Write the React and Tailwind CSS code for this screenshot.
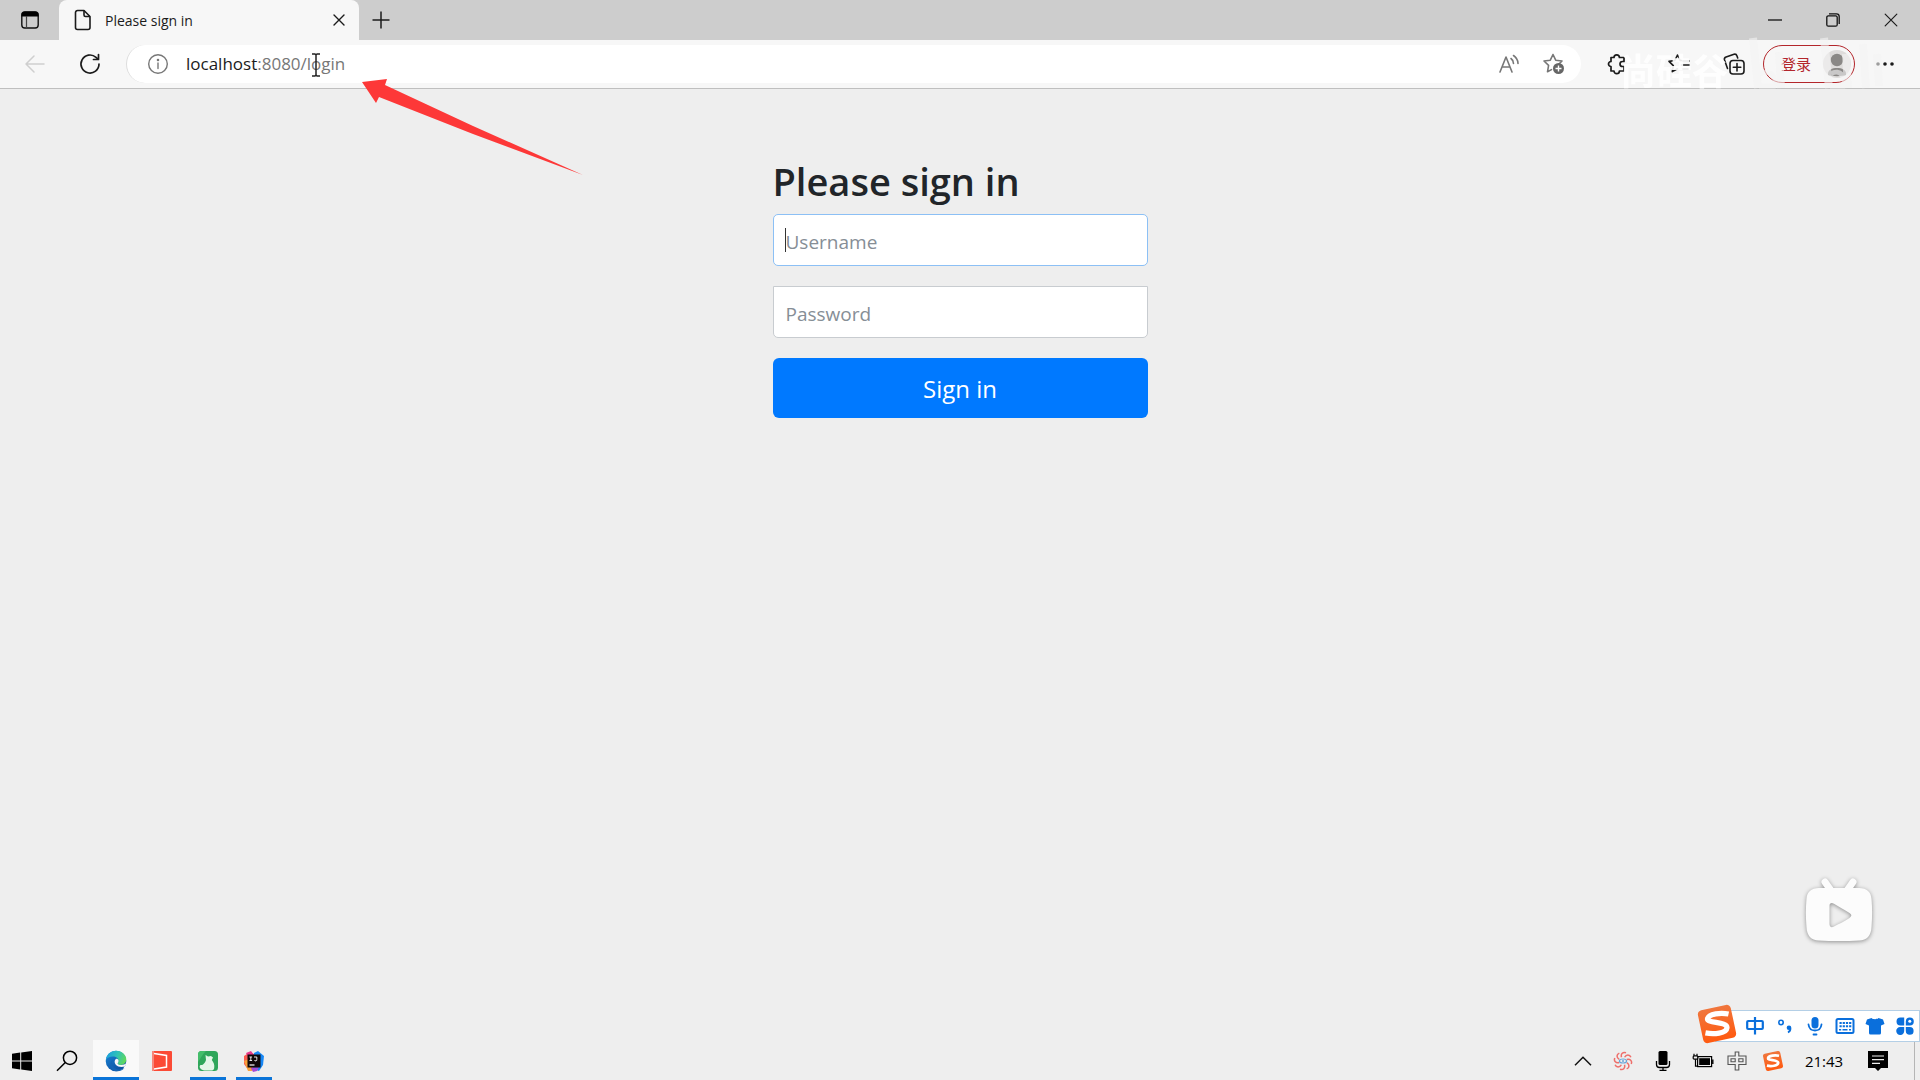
import React, { useState } from "react";

/* ---------- browser icons ---------- */

const TabActionsIcon = () => (
    <svg width="20" height="20" viewBox="0 0 20 20" fill="none">
        <rect x="1.8" y="2" width="16.4" height="16" rx="3" stroke="#111" strokeWidth="1.4" />
        <path d="M1.5 6.5V5A3.5 3.5 0 0 1 5 1.5h10A3.5 3.5 0 0 1 18.5 5v1.5z" fill="#000" />
        <path d="M6.5 6v12" stroke="#444" strokeWidth="1.2" />
    </svg>
);

const FileIcon = () => (
    <svg width="18" height="22" viewBox="0 0 18 22" fill="none" stroke="#1b1b1b" strokeWidth="1.6" strokeLinejoin="round">
        <path d="M3.5 1.5H10l6 6v11a2 2 0 0 1-2 2H3.5a2 2 0 0 1-2-2v-15a2 2 0 0 1 2-2z" />
        <path d="M10 1.5V6a1.5 1.5 0 0 0 1.5 1.5H16" />
    </svg>
);

const CrossIcon = ({ size, width }) => (
    <svg width={size} height={size} viewBox="0 0 12 12" stroke="#1b1b1b" strokeWidth={width} strokeLinecap="round">
        <path d="M1 1l10 10M11 1L1 11" />
    </svg>
);

const BackIcon = () => (
    <svg width="22" height="20" viewBox="0 0 22 20" fill="none" stroke="#cfcfcf" strokeWidth="1.5" strokeLinecap="round" strokeLinejoin="round">
        <path d="M20 10H2M10 2l-8 8 8 8" />
    </svg>
);

const ReloadIcon = () => (
    <svg width="22" height="22" viewBox="0 0 22 22" fill="none" stroke="#1b1b1b" strokeWidth="1.7" strokeLinecap="round" strokeLinejoin="round">
        <path d="M20 11a9 9 0 1 1-3-6.700L19 6.200" />
        <path d="M19.5 1.5v5h-5" />
    </svg>
);

const InfoIcon = () => (
    <svg width="22" height="22" viewBox="0 0 22 22" fill="none" stroke="#777" strokeWidth="1.4" strokeLinecap="round">
        <circle cx="11" cy="11" r="9.3" />
        <path d="M11 10v5.500" />
        <circle cx="11" cy="7" r="0.6" fill="#777" />
    </svg>
);

const ReadAloudIcon = () => (
    <svg width="22" height="20" viewBox="0 0 22 20" fill="none" stroke="#777" strokeWidth="1.6" strokeLinecap="round" strokeLinejoin="round">
        <path d="M2 18L8 3l6 15M4 13h8" />
        <path d="M13 4.500a6 6 0 0 1 2.500 5M15.500 1.500a10 10 0 0 1 4.500 8" />
    </svg>
);

const StarAddIcon = () => (
    <svg width="24" height="24" viewBox="0 0 24 24" fill="none">
        <path
            d="M11 2.500l2.700 5.700 6.300.8-3 3M11 2.500L8.300 8.200 2 9l4.600 4.400-1.100 6.400 4-2.200"
            stroke="#777"
            strokeWidth="1.6"
            strokeLinecap="round"
            strokeLinejoin="round"
        />
        <circle cx="16.5" cy="16.5" r="5.5" fill="#666" />
        <path d="M16.500 13.500v6M13.500 16.500h6" stroke="#fff" strokeWidth="1.4" />
    </svg>
);

const PuzzleIcon = () => (
    <svg width="22" height="22" viewBox="0 0 22 22" fill="none" stroke="#1b1b1b" strokeWidth="1.7" strokeLinejoin="round">
        <path d="M5 4.500h3a2.700 2.700 0 0 1 5.400 0h4.600v4h-1.500a2.500 2.500 0 0 0 0 5H18v4.500h-4.600a2.700 2.700 0 0 1-5.400 0H5v-4.500a2.500 2.500 0 0 1 0-5z" />
    </svg>
);

const FavoritesIcon = () => (
    <svg width="24" height="22" viewBox="0 0 24 22" fill="none" stroke="#1b1b1b" strokeWidth="1.6" strokeLinecap="round" strokeLinejoin="round">
        <path d="M14.500 7.500h-1.300L10.500 2 7.800 7.500 2 8.400l4.300 4.200-1 6 5.200-2.800" />
        <path d="M16 8h6M14.500 12h7.500M16 16h5" />
    </svg>
);

const CollectionsIcon = () => (
    <svg width="24" height="24" viewBox="0 0 24 24" fill="none" stroke="#1b1b1b" strokeWidth="1.6" strokeLinecap="round" strokeLinejoin="round">
        <path d="M5.500 16.500L2.500 8a2.500 2.500 0 0 1 1.600-3L12 2.300a2.500 2.500 0 0 1 3 1.600l.7 2" />
        <rect x="8" y="8.5" width="14" height="13.5" rx="3" />
        <path d="M15 11.500v7.500M11.300 15.300h7.500" />
    </svg>
);

const AvatarIcon = () => (
    <svg width="28" height="28" viewBox="0 0 28 28" className="shrink-0">
        <circle cx="14" cy="14" r="14" fill="#dedcdb" />
        <circle cx="14" cy="10" r="6.2" fill="#8a8886" />
        <path d="M5 25v-1.500c0-3.500 4-5.500 9-5.500s9 2 9 5.500V25c-3 1.500-15 1.500-18 0z" fill="#8a8886" />
    </svg>
);

/* ---------- taskbar icons ---------- */

const WindowsIcon = () => (
    <svg width="20" height="20" viewBox="0 0 20 20" fill="#000">
        <path d="M0 2.800l8.200-1.200v7.900H0zM9.200 1.400L20 0v9.500H9.200zM0 10.500h8.200v7.900L0 17.200zM9.200 10.500H20V20L9.200 18.600z" />
    </svg>
);

const SearchIcon = () => (
    <svg width="22" height="22" viewBox="0 0 22 22" fill="none" stroke="#000" strokeWidth="1.5">
        <circle cx="14" cy="7.8" r="6.6" />
        <path d="M9.300 12.500L1 20.800" />
    </svg>
);

const EdgeIcon = () => (
    <svg width="22" height="22" viewBox="0 0 22 22">
        <defs>
            <linearGradient id="edgeTop" x1="0" y1="0.3" x2="1" y2="0.6">
                <stop offset="0" stopColor="#1b9fe0" />
                <stop offset="0.5" stopColor="#2fc2b8" />
                <stop offset="1" stopColor="#62d957" />
            </linearGradient>
            <linearGradient id="edgeLow" x1="0" y1="0" x2="0.8" y2="1">
                <stop offset="0" stopColor="#1a86d8" />
                <stop offset="1" stopColor="#0c4b9c" />
            </linearGradient>
        </defs>
        <circle cx="11" cy="11" r="10.3" fill="url(#edgeLow)" />
        <path d="M.8 10C1.500 4.500 5.800.8 11 .8c6 0 10.300 4.200 10.300 8.800 0 3.500-2.700 5.300-5.500 5.300-2 0-3.300-.6-3.300-1.500 0-.7 1-1 1-2.600 0-2.300-2.400-4.300-5.600-4.300C4.700 6.500 2 8 .8 10z" fill="url(#edgeTop)" />
        <path d="M10.800 9c-1.500 1.200-1.600 4 0 5.700 2 2.200 5.500 2.600 9.100 1.800l1.700-3.500c-2 1.500-4 2-5.700 1.900-2 0-3.300-.6-3.300-1.500 0-.7 1-1 1-2.600 0-1.200-1.500-2.400-2.800-1.800z" fill="#f7f7f7" />
        <path d="M7.500 10c-1.500 3 0 7.500 4 9 3 1.100 6 .3 8-1-2 2.300-5 3.500-8.500 3.300-3.500-.5-5.600-3.500-5.600-6.300 0-2 .8-4 2.100-5z" fill="#1464b4" />
    </svg>
);

const RedAppIcon = () => (
    <svg width="20" height="20" viewBox="0 0 20 20">
        <rect width="20" height="20" rx="1" fill="#fb4a35" />
        <path d="M2 2.500l12.500 2v11.500L2 18" fill="none" stroke="#fff" strokeWidth="1.5" />
        <path d="M0 0h2v20H0z" fill="#f7877a" />
    </svg>
);

const GreenAppIcon = () => (
    <svg width="22" height="22" viewBox="0 0 22 22">
        <rect x="1" y="1" width="20" height="20" rx="3.5" fill="#2fa65a" />
        <path d="M1 12c3-4 4-7 8-11H4.500A3.500 3.500 0 0 0 1 4.500z" fill="#43bd6a" />
        <path d="M8.500 5l2.500 1.500 3-.5 2 1.500-1.200 2.500c2 2.500 2.900 5 2.400 8-.3 1.500-1 2.500-2.200 2.500H7.500C4 20 1.800 17.500 3 15.500c.8-1 2 0 3-1 1.500-1.500 2.500-2.500 3-4.500z" fill="#e4f6e8" />
    </svg>
);

const IdeaIcon = () => (
    <svg width="22" height="22" viewBox="0 0 22 22">
        <path d="M1 6l6-4 6 3-2 15-5 1-5-7z" fill="#fb5d52" />
        <path d="M1 11l5-2 3 12H5z" fill="#f9a13a" />
        <path d="M3 3l5-2 3 4-5 4z" fill="#e8388a" />
        <path d="M11 3l4-2 6 5-1 9-4 6-6-2z" fill="#1687f5" />
        <path d="M8 18l8-1-2 4-4 1z" fill="#a44bd6" />
        <rect x="4.5" y="4.5" width="13" height="13" fill="#100808" />
        <path d="M6.500 7h2.600M7.800 7v3.500M6.500 10.500h2.600M11 7h2.800v2.500a1 1 0 0 1-2.300.5" stroke="#fff" strokeWidth="0.9" fill="none" />
        <path d="M6.500 15h5" stroke="#fff" strokeWidth="1.2" />
    </svg>
);

const ChevronUpIcon = () => (
    <svg width="18" height="10" viewBox="0 0 18 10" fill="none" stroke="#111" strokeWidth="1.5">
        <path d="M1 9.300l8-8 8 8" />
    </svg>
);

const petals = [0, 45, 90, 135, 180, 225, 270, 315];

const FlowerIcon = () => (
    <svg width="20" height="20" viewBox="0 0 20 20" fill="none">
        {petals.map((a) => (
            <path key={a} d="M8.500 6.200C7.500 3 10 .5 13 1.800" stroke="#ee6f6b" strokeWidth="1.5" transform={`rotate(${a} 10 10)`} />
        ))}
        <ellipse cx="10" cy="10" rx="3.6" ry="2" stroke="#6aa6d8" strokeWidth="1.2" />
        <circle cx="10" cy="10" r="1" fill="#6aa6d8" />
    </svg>
);

const TrayMicIcon = () => (
    <svg width="16" height="20" viewBox="0 0 16 20">
        <rect x="3.5" y="0" width="9" height="14" rx="1.5" fill="#000" />
        <path d="M1.500 10v3.500c0 1.800 1 3 3 3h7c2 0 3-1.200 3-3V10M8 16.500V19M4.500 19.300h7" fill="none" stroke="#000" strokeWidth="1.3" />
    </svg>
);

const BatteryIcon = () => (
    <svg width="22" height="16" viewBox="0 0 22 16" fill="none" stroke="#000">
        <rect x="5.6" y="3.6" width="14" height="10" strokeWidth="1.2" />
        <rect x="7.2" y="5.2" width="10.8" height="6.8" fill="#000" stroke="none" />
        <path d="M20.800 6.500v4.500" strokeWidth="1.4" />
        <path d="M2 .8v2.400M5 .8v2.400M3.500 6v7.200h2" strokeWidth="1.2" />
        <rect x="1.2" y="2.8" width="4.6" height="3.4" rx="1" fill="#eee" strokeWidth="1.2" />
    </svg>
);

const ImeModeIcon = () => (
    <svg width="20" height="20" viewBox="0 0 20 20" fill="#eee" stroke="#555" strokeWidth="1.1">
        <path d="M8.200 1h3.600v4H19v8.500h-7.200V19H8.200v-5.500H1V5h7.200z" />
        <path d="M4 7.800h4.200v3H4zM11.800 7.800H16v3h-4.200z" />
    </svg>
);

const SogouIcon = ({ size }) => (
    <svg width={size} height={size} viewBox="0 0 40 40">
        <defs>
            <linearGradient id="sogouFill" x1="0" y1="0" x2="0" y2="1">
                <stop offset="0" stopColor="#f0763d" />
                <stop offset="1" stopColor="#ff5a10" />
            </linearGradient>
        </defs>
        <rect x="4" y="4" width="32" height="32" rx="4" fill="url(#sogouFill)" transform="rotate(-12 20 20)" />
        <path
            d="M31 10.500C24 9 12 10 11 15 10 19.500 30 17.500 29.500 23.500 29 29 17 30 9 28.500"
            fill="none"
            stroke="#fff"
            strokeWidth="5"
        />
    </svg>
);

const NotificationIcon = () => (
    <svg width="20" height="20" viewBox="0 0 20 20">
        <path d="M0 0h20v17h-7l-3 3-3-3H0z" fill="#000" />
        <path d="M4 5h12M4 8.700h12M4 12.400h8" stroke="#eee" strokeWidth="1.2" />
    </svg>
);

/* ---------- input method bar icons ---------- */

const ImeChineseIcon = () => (
    <svg width="20" height="20" viewBox="0 0 20 20" fill="none" stroke="#0a6fdc" strokeWidth="2.2">
        <rect x="2.2" y="5" width="15.6" height="8" rx="1" />
        <path d="M10 1v17.500" />
    </svg>
);

const ImePunctIcon = () => (
    <svg width="16" height="16" viewBox="0 0 16 16" fill="none">
        <circle cx="4" cy="4.5" r="2.2" stroke="#0a6fdc" strokeWidth="1.6" />
        <circle cx="12" cy="9.8" r="2.3" fill="#0a6fdc" />
        <path d="M13.400 10c.2 2-.6 3.500-2.400 4.500" stroke="#0a6fdc" strokeWidth="1.8" />
    </svg>
);

const ImeMicIcon = () => (
    <svg width="18" height="20" viewBox="0 0 18 20" fill="none" stroke="#0a6fdc" strokeWidth="1.8" strokeLinecap="round">
        <rect x="5.5" y="1" width="7" height="11.5" rx="3.5" fill="#0a6fdc" stroke="none" />
        <path d="M2.500 8.500c.5 4 3 6 6.500 6s6-2 6.500-6M7.500 18.500h3" />
    </svg>
);

const ImeKeyboardIcon = () => (
    <svg width="20" height="18" viewBox="0 0 20 18" fill="none" stroke="#0a6fdc">
        <rect x="1.5" y="2" width="17" height="14" rx="1.5" strokeWidth="2" />
        <path d="M4.500 6h12M4.500 9.300h12" strokeWidth="2" strokeDasharray="2.200 1" />
        <path d="M4 12.700h2.200M7.500 12.700h5M14 12.700h2" strokeWidth="1.6" />
    </svg>
);

const ImeSkinIcon = () => (
    <svg width="20" height="18" viewBox="0 0 20 18" fill="#0a6fdc">
        <path d="M6.500 1c1 1.600 6 1.600 7 0l4.500 1.500 1.500 4.500-3.500 1.500V16a1.500 1.500 0 0 1-1.500 1.500h-9A1.500 1.500 0 0 1 4 16V8.500L.5 7 2 2.500z" />
    </svg>
);

const ImeToolsIcon = () => (
    <svg width="20" height="20" viewBox="0 0 20 20" fill="#0a6fdc">
        <path d="M5.500 1.500h3.700v8H5.500a4 4 0 0 1 0-8zM10.800 9.500V5.500a4 4 0 1 1 4 4zM9.200 11v3.700a4 4 0 1 1-4-3.700zM10.800 11h4a3.900 3.900 0 1 1-4 4z" />
        <circle cx="14.8" cy="5.3" r="1.5" fill="#fff" />
    </svg>
);

/* ---------- page parts ---------- */

const TabStrip = () => (
    <div className="flex h-10 bg-[#cdcdcd]">
        <button aria-label="Tab actions" className="flex w-[59px] items-center justify-center">
            <TabActionsIcon />
        </button>
        <div className="flex w-[300px] items-center rounded-t-lg bg-[#f7f7f7] pr-2.5 pl-[15px]">
            <FileIcon />
            <span className="ml-[13px] flex-1 text-[14px] text-[#1b1b1b]">Please sign in</span>
            <button aria-label="Close tab" className="p-1">
                <CrossIcon size={12} width={1.4} />
            </button>
        </div>
        <button aria-label="New tab" className="flex w-11 items-center justify-center">
            <svg width="18" height="18" viewBox="0 0 18 18" stroke="#1b1b1b" strokeWidth="1.5">
                <path d="M9 .5v17M.5 9h17" />
            </svg>
        </button>
        <div className="ml-auto flex">
            <button aria-label="Minimize" className="flex w-[58px] items-center justify-center">
                <svg width="14" height="14" viewBox="0 0 14 14" stroke="#111" strokeWidth="1.3">
                    <path d="M0 7h14" />
                </svg>
            </button>
            <button aria-label="Restore" className="flex w-[58px] items-center justify-center">
                <svg width="14" height="14" viewBox="0 0 14 14" fill="none" stroke="#111" strokeWidth="1.3">
                    <rect x=".8" y="2.8" width="10.4" height="10.4" rx="1.5" />
                    <path d="M3 .8h7.500a2.700 2.700 0 0 1 2.700 2.700V11" />
                </svg>
            </button>
            <button aria-label="Close" className="flex w-[58px] items-center justify-center">
                <CrossIcon size={14} width={1} />
            </button>
        </div>
    </div>
);

const Toolbar = () => (
    <div className="flex h-[49px] items-center border-b border-[#bfbfbf] bg-[#f7f7f7]">
        <button aria-label="Back" className="ml-6">
            <BackIcon />
        </button>
        <button aria-label="Refresh" className="mr-[25px] ml-[33px]">
            <ReloadIcon />
        </button>
        <div className="flex h-[38px] flex-1 items-center rounded-full border-l border-[#dcdcdc] bg-white pr-[15px] pl-5">
            <InfoIcon />
            <a href="#login" className="ml-[17px] flex-1 text-[17px] text-[#777]">
                <span className="text-[#1b1b1b]">localhost</span>:8080/login
            </a>
            <button aria-label="Read aloud" className="mr-[22px]">
                <ReadAloudIcon />
            </button>
            <button aria-label="Add to favorites">
                <StarAddIcon />
            </button>
        </div>
        <button aria-label="Extensions" className="flex w-[72px] justify-center">
            <PuzzleIcon />
        </button>
        <button aria-label="Favorites" className="flex w-[52px] justify-center">
            <FavoritesIcon />
        </button>
        <button aria-label="Collections" className="flex w-[58px] justify-center">
            <CollectionsIcon />
        </button>
        <button className="flex h-[38px] w-[92px] items-center justify-between rounded-full border border-[#b3262b] pr-[3px] pl-[17px] text-[15px] text-[#b3262b]">
            登录
            <AvatarIcon />
        </button>
        <button aria-label="Settings and more" className="mr-[5px] flex w-[60px] justify-center">
            <svg width="18" height="4" viewBox="0 0 18 4" fill="#1b1b1b">
                <circle cx="2" cy="2" r="1.8" />
                <circle cx="9" cy="2" r="1.8" />
                <circle cx="16" cy="2" r="1.8" />
            </svg>
        </button>
    </div>
);

const SignInForm = () => {
    const [username, setUsername] = useState("");
    const [password, setPassword] = useState("");

    return (
        <form className="mx-auto w-full max-w-[375px]" onSubmit={(e) => e.preventDefault()}>
            <h2 className="mb-[9px] text-[38px] leading-12 font-semibold text-[#212529]">Please sign in</h2>
            <div className="relative mb-5">
                <input
                    type="text"
                    aria-label="Username"
                    placeholder="Username"
                    value={username}
                    onChange={(e) => setUsername(e.target.value)}
                    className="block h-[52px] w-full rounded-[5px] border border-[#8cc0f5] bg-white px-3 pt-1 text-[19px] text-[#495057] outline-none placeholder:text-[#868e96]"
                />
                <span className="absolute top-3.5 left-3 h-6 w-px bg-[#333]" />
            </div>
            <div className="mb-5">
                <input
                    type="password"
                    aria-label="Password"
                    placeholder="Password"
                    value={password}
                    onChange={(e) => setPassword(e.target.value)}
                    className="block h-[52px] w-full rounded-b-[5px] border border-[#c8ccd0] bg-white px-3 pt-1 text-[19px] text-[#495057] outline-none placeholder:text-[#868e96]"
                />
            </div>
            <button type="submit" className="h-[60px] w-full rounded-md bg-[#0079ff] pt-0.5 text-[24px] text-white">
                Sign in
            </button>
        </form>
    );
};

const TaskTile = ({ label, open, active, children }) => (
    <button
        aria-label={label}
        className={`flex h-full w-[46px] flex-col items-center ${active ? "bg-[#f9f9f9]" : ""}`}
    >
        <span className="flex flex-1 items-center pt-1">{children}</span>
        <span className={`h-[3px] ${active ? "w-full" : "w-9"} ${open ? "bg-[#0a74d8]" : ""}`} />
    </button>
);

const Taskbar = () => (
    <footer className="flex h-10 items-stretch">
        <button aria-label="Start" className="flex w-11 items-center justify-center pt-0.5">
            <WindowsIcon />
        </button>
        <button aria-label="Search" className="flex w-[49px] items-center justify-center pt-0.5 pr-[3px]">
            <SearchIcon />
        </button>
        <TaskTile label="Edge" open active><EdgeIcon /></TaskTile>
        <TaskTile label="Presenter"><RedAppIcon /></TaskTile>
        <TaskTile label="Navicat" open><GreenAppIcon /></TaskTile>
        <TaskTile label="IntelliJ IDEA" open><IdeaIcon /></TaskTile>

        <div className="ml-auto flex items-center pt-0.5">
            <span className="flex w-10 justify-center"><ChevronUpIcon /></span>
            <span className="flex w-10 justify-center"><FlowerIcon /></span>
            <span className="flex w-10 justify-center"><TrayMicIcon /></span>
            <span className="flex w-10 justify-center"><BatteryIcon /></span>
            <span className="flex w-7 justify-center"><ImeModeIcon /></span>
            <span className="flex w-11 justify-center"><SogouIcon size={22} /></span>
            <time className="w-[58px] text-center text-[15px] text-black">21:43</time>
            <span className="ml-[9px] flex w-8 justify-center"><NotificationIcon /></span>
        </div>
        <div className="ml-5 w-1.5 border-l border-[#b5b5b5]" />
    </footer>
);

const ImeBar = () => (
    <div className="absolute right-0 bottom-[38px] flex h-8 items-center border border-[#b4cfe6] bg-white pl-6">
        <span className="absolute -top-2 -left-5"><SogouIcon size={42} /></span>
        <span className="flex w-[30px] justify-center"><ImeChineseIcon /></span>
        <span className="flex w-[30px] justify-center"><ImePunctIcon /></span>
        <span className="flex w-[30px] justify-center"><ImeMicIcon /></span>
        <span className="flex w-[30px] justify-center"><ImeKeyboardIcon /></span>
        <span className="flex w-[30px] justify-center"><ImeSkinIcon /></span>
        <span className="flex w-[29px] justify-center"><ImeToolsIcon /></span>
    </div>
);

const PlayerBadge = () => (
    <svg className="absolute right-[43px] bottom-[132px] drop-shadow-[0_1px_2px_rgba(0,0,0,0.4)]" width="76" height="76" viewBox="0 0 76 76">
        <path d="M24 10l7 10M52 10l-7 10" stroke="#fcfcfc" strokeWidth="7" strokeLinecap="round" />
        <path
            fillRule="evenodd"
            fill="#fcfcfc"
            d="M18 16h40c8 0 12 4 12.500 11 .8 9 .8 18 0 28-.5 9-4.500 13-12.500 13.500-13 .7-27 .7-40 0C10 68 6 64 5.500 55c-.8-10-.8-19 0-28C6 20 10 16 18 16zM28.500 34v18c0 3 2 4 4.500 2.500 5-2.500 10-5 15.500-8.500 2.500-2 2.500-3.500 0-5-5.500-3.500-10.500-6.500-15.500-9.300-2.500-1.200-4.500-.7-4.500 2.300z"
        />
    </svg>
);

const Watermark = () => (
    <div className="pointer-events-none absolute top-9 right-8 flex items-end">
        <span className="mr-4 text-[36px] leading-[44px] font-bold text-white opacity-90">尚硅谷</span>
        <svg className="opacity-60" width="144" height="58" viewBox="0 0 144 58" fill="none" stroke="#f4f4f4" strokeWidth="8">
            <path d="M9 2l5 50M35 16l2 36M80 2l5 50M102 18l2 34M119 8l3 44M133 18l2 32" />
            <path d="M16 38c10-6 18 4 14 12H15M87 38c9-6 16 4 12 12H86" strokeWidth="5" />
        </svg>
    </div>
);

export default function App() {
    return (
        <div className="relative flex min-h-screen flex-col overflow-hidden bg-[#eeeeee] font-['Open_Sans','Noto_Sans_CJK_SC',sans-serif]">
            <TabStrip />
            <Toolbar />
            <main className="flex-1 px-4 pt-17">
                <SignInForm />
            </main>
            <Taskbar />

            {/* pointer arrow towards the address */}
            <svg className="absolute top-[78px] left-[360px]" width="226" height="100" viewBox="0 0 226 100">
                <path d="M2 4l25-3-2 6 88 41 110 49-110-41-94-37-3 6z" fill="#fd3838" />
            </svg>

            {/* text cursor */}
            <svg className="absolute top-[53px] left-[311px]" width="10" height="24" viewBox="0 0 10 24" fill="none" stroke="#222" strokeWidth="1.5">
                <path d="M1 1h3l1 1 1-1h3M5 2v20M1 23h3l1-1 1 1h3" />
            </svg>

            <Watermark />
            <PlayerBadge />
            <ImeBar />
        </div>
    );
}
